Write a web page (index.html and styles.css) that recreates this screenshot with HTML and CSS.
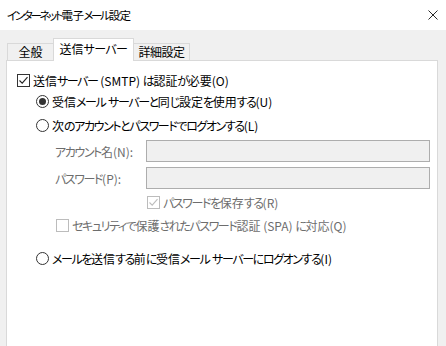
FILE: index.html
```html
<!DOCTYPE html>
<html lang="ja">

<head>
    <meta charset="UTF-8">
    <meta name="viewport" content="width=device-width, initial-scale=1.0">
    <title>インターネット電子メール設定</title>
    <link rel="stylesheet" href="styles.css">
</head>

<body>
    <div class="titlebar">
        <span class="title"><span class="k">インターネット</span>電子<span class="k">メール</span>設定</span>
        <svg class="close" width="10" height="10" viewBox="0 0 10 10">
            <path d="M0.5 0.5 L9.5 9.5 M9.5 0.5 L0.5 9.5" stroke="#111" stroke-width="0.9" fill="none" />
        </svg>
    </div>

    <div class="tabs">
        <div class="tab tab1">全般</div>
        <div class="tab active">送信<span class="k">サーバー</span></div>
        <div class="tab tab3">詳細設定</div>
    </div>

    <div class="panel">
        <div class="row r1">
            <span class="box checked">
                <svg width="11" height="11" viewBox="0 0 11 11"><path d="M1.5 5.5 L4.2 8.2 L9.5 2.2" stroke="#222" stroke-width="1.1" fill="none" /></svg>
            </span>
            <span>送信<span class="k">サーバー</span> (SMTP) <span class="k">は</span>認証<span class="k">が</span>必要(O)</span>
        </div>
        <div class="row r2 indent1">
            <span class="radio on"></span>
            <span>受信<span class="k">メール</span> <span class="k">サーバーと</span>同<span class="k">じ</span>設定<span class="k">を</span>使用<span class="k">する</span>(U)</span>
        </div>
        <div class="row r3 indent1">
            <span class="radio"></span>
            <span>次<span class="k">のアカウントとパスワードでログオンする</span>(L)</span>
        </div>
        <div class="field f1">
            <label class="flabel"><span class="k">アカウント</span>名(N):</label>
            <div class="input"></div>
        </div>
        <div class="field f2">
            <label class="flabel"><span class="k">パスワード</span>(P):</label>
            <div class="input"></div>
        </div>
        <div class="row r4 save disabled">
            <span class="box checked">
                <svg width="11" height="11" viewBox="0 0 11 11"><path d="M1.5 5.5 L4.2 8.2 L9.5 2.2" stroke="#bdbdbd" stroke-width="1.1" fill="none" /></svg>
            </span>
            <span><span class="k">パスワードを</span>保存<span class="k">する</span>(R)</span>
        </div>
        <div class="row r5 indent2 disabled">
            <span class="box"></span>
            <span><span class="k">セキュリティで</span>保護<span class="k">された</span><span class="k">パスワード</span>認証 (SPA) <span class="k">に</span>対応(Q)</span>
        </div>
        <div class="row r6 indent1">
            <span class="radio"></span>
            <span><span class="k">メールを</span>送信<span class="k">する</span>前<span class="k">に</span>受信<span class="k">メール</span> <span class="k">サーバーにログオンする</span>(I)</span>
        </div>
    </div>
</body>

</html>
```

FILE: styles.css
```css
* {
    box-sizing: border-box;
}

body {
    margin: 0;
    height: 346px;
    overflow: hidden;
    background: #f0f0f0;
    font-family: "Noto Sans CJK JP", "Noto Sans", sans-serif;
    font-size: 12px;
    color: #000;
    font-feature-settings: "palt";
}

/* kana runs are narrower in the original UI font */
.k {
    letter-spacing: -1.4px;
}

.titlebar {
    height: 30px;
    background: #fff;
    display: flex;
    align-items: center;
    justify-content: space-between;
    padding: 0 8px 0 7px;
}

.title {
    font-size: 11.5px;
    letter-spacing: -0.6px;
}

.title .k {
    letter-spacing: -2.3px;
}

.tabs {
    display: flex;
    align-items: flex-end;
    padding: 8px 0 0 7px;
    height: 30px;
}

.tab {
    height: 17px;
    border: 1px solid #d9d9d9;
    border-bottom: none;
    background: #f0f0f0;
    display: flex;
    align-items: center;
    justify-content: center;
    line-height: 1;
}

.tab1 {
    width: 46px;
    border-right: none;
}

.tab3 {
    width: 56px;
    border-left: none;
    letter-spacing: -0.5px;
}

.tab.active {
    width: 81px;
    height: 23px;
    margin-bottom: -1px;
    background: #fff;
    position: relative;
    padding-bottom: 3px;
}

.tab.active .k {
    letter-spacing: -0.6px;
}

.panel {
    margin: 0 8px 0 6px;
    height: 300px;
    background: #fff;
    border: 1px solid #d9d9d9;
    padding: 0 0 0 10px;
}

.row {
    display: flex;
    align-items: center;
    gap: 3px;
    height: 20px;
    white-space: nowrap;
}

.r1 { margin-top: 9px; }
.r2 { margin-top: 1px; }
.r3 { margin-top: 4px; }
.r4 { margin-top: 3px; }
.r5 { margin-top: 3px; }
.r6 { margin-top: 13px; }

.indent1 { padding-left: 19px; }
.indent2 { padding-left: 39px; }
.save { padding-left: 130px; }

.disabled {
    color: #6d6d6d;
}

.box {
    width: 13px;
    height: 13px;
    border: 1px solid #333;
    background: #fff;
    display: flex;
    align-items: center;
    justify-content: center;
    flex-shrink: 0;
}

.disabled .box {
    border-color: #bcbcbc;
}

.radio {
    width: 13px;
    height: 13px;
    border: 1px solid #333;
    border-radius: 50%;
    background: #fff;
    display: flex;
    align-items: center;
    justify-content: center;
    flex-shrink: 0;
}

.radio.on::after {
    content: "";
    width: 7px;
    height: 7px;
    border-radius: 50%;
    background: #333;
}

.field {
    display: flex;
    align-items: center;
    height: 22px;
    padding-left: 38px;
    color: #6d6d6d;
}

.f1 { margin-top: 5px; }
.f2 { margin-top: 5px; }

.flabel {
    width: 91px;
    flex-shrink: 0;
}

.input {
    width: 284px;
    height: 22px;
    background: #f0f0f0;
    border: 1px solid #adadad;
}
```
